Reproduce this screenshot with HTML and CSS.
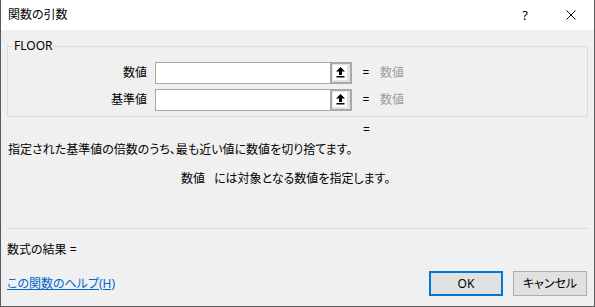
FILE: index.html
```html
<!DOCTYPE html>
<html lang="ja">
<head>
<meta charset="utf-8">
<title>関数の引数</title>
<link rel="stylesheet" href="styles.css">
</head>
<body>
<div class="window">
  <div class="titlebar">
    <div class="title">関数の引数</div>
    <div class="tb-btn help">?</div>
    <div class="tb-btn close">
      <svg width="10" height="10" viewBox="0 0 10 10"><path d="M0.5 0.5L9.5 9.5M9.5 0.5L0.5 9.5" stroke="#000" stroke-width="1" fill="none"/></svg>
    </div>
  </div>
  <div class="content">
    <fieldset class="group">
      <legend class="legend">FLOOR</legend>
      <div class="row">
        <div class="label">数値</div>
        <div class="input"></div>
        <div class="refbtn"><span class="refinner"><svg width="9" height="11" viewBox="0 0 9 11"><path d="M4.5 0L9 4.5H6V8H3V4.5H0Z" fill="#000"/><rect x="0.5" y="9" width="8" height="1.5" fill="#000"/></svg></span></div>
        <div class="eq">=</div>
        <div class="val">数値</div>
      </div>
      <div class="row">
        <div class="label">基準値</div>
        <div class="input"></div>
        <div class="refbtn"><span class="refinner"><svg width="9" height="11" viewBox="0 0 9 11"><path d="M4.5 0L9 4.5H6V8H3V4.5H0Z" fill="#000"/><rect x="0.5" y="9" width="8" height="1.5" fill="#000"/></svg></span></div>
        <div class="eq">=</div>
        <div class="val">数値</div>
      </div>
    </fieldset>
    <div class="result-eq">=</div>
    <div class="desc">指定された基準値の倍数のうち、最も近い値に数値を切り捨てます。</div>
    <div class="argdesc"><span class="argname">数値</span><span>には対象となる数値を指定します。</span></div>
    <div class="sep"></div>
    <div class="formula">数式の結果 =</div>
    <div class="footer">
      <a class="help-link" href="#">この関数のヘルプ(H)</a>
      <div class="buttons">
        <div class="btn ok">OK</div>
        <div class="btn cancel">キャンセル</div>
      </div>
    </div>
  </div>
</div>
</body>
</html>
```
FILE: styles.css
```css
html, body {
  margin: 0;
  padding: 0;
  background: #f0f0f0;
}
body {
  font-family: "Noto Sans", "Noto Sans CJK JP", sans-serif;
  font-size: 12px;
  line-height: 16px;
  color: #000;
  font-feature-settings: "palt";
}
.window {
  width: 595px;
  height: 307px;
  box-sizing: border-box;
  border-left: 1px solid #5a5a5a;
  border-right: 1px solid #5a5a5a;
  border-bottom: 1px solid #5a5a5a;
  background: #f0f0f0;
  display: flex;
  flex-direction: column;
}
.titlebar {
  height: 30px;
  background: #fff;
  display: flex;
  align-items: center;
}
.title {
  flex: 1;
  padding-left: 7px;
}
.tb-btn {
  width: 46px;
  height: 30px;
  display: flex;
  align-items: center;
  justify-content: center;
}
.help {
  font-family: "Noto Sans", sans-serif;
  font-size: 13px;
}
.content {
  padding: 0 6px;
}
.group {
  margin: 8px 0 0 0;
  padding: 8px 0 5px 0;
  border: 1px solid #dcdcdc;
  display: flex;
  flex-direction: column;
  gap: 5px;
}
.legend {
  margin-left: 5px;
  padding: 0 1px;
  line-height: 16px;
}
.row {
  display: flex;
  align-items: center;
  height: 22px;
}
.label {
  width: 139px;
  text-align: right;
  margin-right: 8px;
}
.input {
  width: 174px;
  height: 20px;
  border: 1px solid #a8a8a8;
  border-right: none;
  background: #fff;
}
.refbtn {
  width: 18px;
  height: 18px;
  border: 2px solid #a8a8a8;
  background: #e3e3e3;
  display: flex;
  align-items: flex-start;
  justify-content: flex-start;
}
.refinner {
  width: 14px;
  height: 15px;
  margin-top: 1px;
  margin-left: 1px;
  background: #fff;
  display: flex;
  align-items: center;
  justify-content: center;
}
.eq {
  margin-left: 10px;
  width: 8px;
  text-align: center;
}
.val {
  margin-left: 10px;
  color: #9d9d9d;
}
.result-eq {
  margin-top: 5px;
  padding-left: 356px;
}
.desc {
  margin-top: 4px;
  padding-left: 1px;
}
.argdesc {
  margin-top: 13px;
  padding-left: 174px;
}
.argname {
  margin-right: 9px;
}
.sep {
  margin-top: 41px;
  height: 1px;
  background: #dadada;
}
.formula {
  margin-top: 13px;
}
.footer {
  margin-top: 13px;
  display: flex;
  align-items: center;
  justify-content: space-between;
}
.help-link {
  color: #0066cc;
  text-decoration: underline;
}
.buttons {
  display: flex;
  gap: 10px;
  margin-right: 1px;
}
.btn {
  box-sizing: border-box;
  width: 74px;
  height: 25px;
  background: #e1e1e1;
  display: flex;
  align-items: center;
  justify-content: center;
}
.ok {
  border: 2px solid #0078d7;
}
.cancel {
  border: 1px solid #adadad;
}
```
